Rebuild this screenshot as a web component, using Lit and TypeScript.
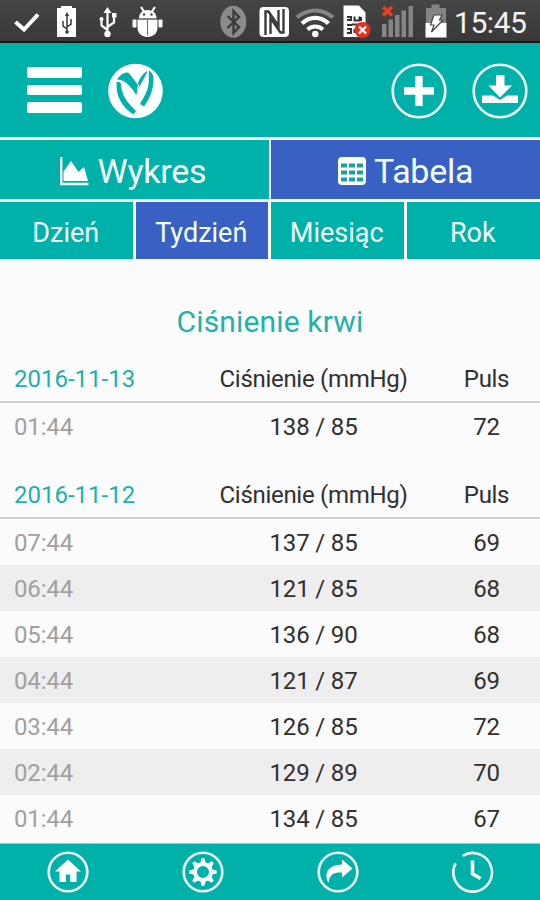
import { LitElement, html, svg, css } from "lit";
import { customElement } from "lit/decorators.js";
import { classMap } from "lit/directives/class-map.js";

interface Reading {
  time: string;
  pressure: string;
  pulse: number;
}

interface Day {
  date: string;
  readings: Reading[];
}

const DAYS: Day[] = [
  { date: "2016-11-13", readings: [{ time: "01:44", pressure: "138 / 85", pulse: 72 }] },
  {
    date: "2016-11-12",
    readings: [
      { time: "07:44", pressure: "137 / 85", pulse: 69 },
      { time: "06:44", pressure: "121 / 85", pulse: 68 },
      { time: "05:44", pressure: "136 / 90", pulse: 68 },
      { time: "04:44", pressure: "121 / 87", pulse: 69 },
      { time: "03:44", pressure: "126 / 85", pulse: 72 },
      { time: "02:44", pressure: "129 / 89", pulse: 70 },
      { time: "01:44", pressure: "134 / 85", pulse: 67 },
    ],
  },
];

@customElement("status-bar")
class StatusBar extends LitElement {
  static styles = css`
    :host {
      display: flex;
      justify-content: space-between;
      height: 43px;
      box-sizing: border-box;
      border-bottom: 2px solid #1c1315;
      background: linear-gradient(#454545, #393939);
      color: #f4f4f4;
    }
    .icons {
      display: block;
      height: 41px;
    }
    .clock {
      width: 86px;
      padding-top: 4px;
      box-sizing: border-box;
      font: 30px/38px Roboto, sans-serif;
      letter-spacing: -0.450px;
      white-space: nowrap;
    }
  `;

  render() {
    return html`
      <svg class="icons" width="454" height="41" viewBox="0 0 454 41">
        <path d="M15.500 22l8.500 7.500L38 14.500" fill="none" stroke="#fff" stroke-width="4" />
        <path d="M57 8h4V6h11v2h4v29H57z" fill="#fff" />
        <g fill="none" stroke="#3a3a3a" stroke-width="1.500">
          <path d="M67 15v18M67 29l-4-3v-5M67 27l4-3v-5" />
        </g>
        <path d="M67 12l2.200 4h-4.400z" fill="#3a3a3a" />
        <circle cx="67" cy="32" r="1.800" fill="#3a3a3a" />
        <g fill="none" stroke="#fff" stroke-width="2.200">
          <path d="M107.500 11v22M107.500 30l-6-4.500v-6M107.500 27l6.500-4.500v-7" />
        </g>
        <path d="M107.500 7l4 6h-8z" fill="#fff" />
        <circle cx="107.500" cy="34" r="3.200" fill="#fff" />
        <circle cx="101.500" cy="19" r="2" fill="#fff" />
        <rect x="112" y="13" width="4.500" height="4.500" fill="#fff" />
        <g fill="#fff">
          <path d="M139 18.500c0-5 3-8.500 8.500-8.500s9 3.500 9 8.500z" />
          <path d="M137.500 19.500h20v8c0 6-4.500 9.500-10 9.500s-10-3.500-10-9.500z" />
          <rect x="132.500" y="19.500" width="4" height="8" rx="1" />
          <rect x="158.500" y="19.500" width="4" height="8" rx="1" />
        </g>
        <path d="M141 7l3 4.500M155 7l-3 4.500" stroke="#fff" stroke-width="2.200" />
        <path d="M147.500 19.500v16M137 19h21" stroke="#666" stroke-width="1" />
        <circle cx="144" cy="14.500" r="1.200" fill="#444" />
        <circle cx="151.500" cy="14.500" r="1.200" fill="#444" />

        <ellipse cx="233.300" cy="21.800" rx="13" ry="16" fill="#8b8b8b" />
        <path d="M227.500 16l11.500 11-5.500 6v-22l5.500 6-11.500 11" fill="none" stroke="#3b3b3b" stroke-width="2.400" />

        <rect x="259.500" y="7" width="29.500" height="30" rx="4" fill="#fff" />
        <g fill="none" stroke="#3b3b3b" stroke-width="2.400">
          <path d="M265.500 35V11.500h3l10 14.500V10" />
          <path d="M283.500 9v23.500h-3L270.500 18v16" />
        </g>

        <g fill="none">
          <path d="M297 17.500c10.500-9.500 25.500-9.500 36 0" stroke="#858585" stroke-width="4" />
          <path d="M302 23.500c8-7.500 18.500-7.500 26.500 0" stroke="#fff" stroke-width="4.400" />
          <path d="M307.500 29.500c4.500-4 11-4 15.500 0" stroke="#fff" stroke-width="3.800" />
        </g>
        <circle cx="315.300" cy="34" r="3.200" fill="#fff" />

        <path d="M343.500 5.500H359l6.500 7V37h-22z" fill="#fff" />
        <g fill="none" stroke="#333" stroke-width="2">
          <path d="M347 17h4v3h-4M347 25h5M347 29h4v4h-4M354.500 16.500v4h5v-4M361 17v4M354.500 33v-4M352 24.500h8" />
        </g>
        <circle cx="362.500" cy="30" r="8" fill="#e62e20" />
        <path d="M359 26.500l7 7M366 26.500l-7 7" stroke="#fff" stroke-width="2.400" />

        <path d="M383 7l9 8.500M392 7l-9 8.500" stroke="#e8402a" stroke-width="3.200" />
        <g fill="#858585">
          <rect x="382" y="24" width="4.500" height="13" />
          <rect x="388.500" y="19.500" width="4.500" height="17.500" />
          <rect x="395" y="15" width="4.500" height="22" />
          <rect x="401.500" y="10.500" width="4.500" height="26.500" />
          <rect x="408.500" y="6" width="4.500" height="31" />
        </g>

        <path d="M426 8h5.500V4.500h8V8h6.500v17h-20z" fill="#858585" />
        <path d="M425.500 23h21v14.500h-21z" fill="#fff" />
        <path d="M434 15h8l-2.500 5h3.500L431.500 32l2.500-7h-3.500z" fill="#fff" stroke="#444" stroke-width="1.200" />
      </svg>
      <span class="clock">15:45</span>
    `;
  }
}

@customElement("app-root")
class AppRoot extends LitElement {
  static styles = css`
    :host {
      display: flex;
      flex-direction: column;
      height: 900px;
      overflow: hidden;
      background: #fbfbfb;
      font-family: Roboto, sans-serif;
      color: #303030;
    }
    svg {
      display: block;
    }
    .header {
      display: flex;
      align-items: center;
      height: 94px;
      box-sizing: border-box;
      padding: 1px 12.500px 0 27px;
      background: #00b1a9;
    }
    .menu {
      display: grid;
      gap: 7px;
      width: 54.500px;
      margin: 0 26px 1px 0;
    }
    .menu i {
      height: 10.500px;
      border-radius: 2px;
      background: #fff;
    }
    .actions {
      display: flex;
      gap: 25px;
      margin-left: auto;
    }
    .tabs {
      display: grid;
      grid-template-columns: 1fr 1fr;
      gap: 2.500px;
      height: 59px;
      margin-top: 3px;
    }
    .ranges {
      display: grid;
      grid-template-columns: 133px 132px 133px 1fr;
      gap: 3px;
      height: 57px;
      margin-top: 3px;
    }
    .tab {
      display: flex;
      align-items: center;
      justify-content: center;
      background: #00b1a9;
      color: #f3fffd;
      white-space: nowrap;
    }
    .tab.active {
      background: #3961c3;
    }
    .tabs .tab {
      gap: 8px;
      padding: 3px 2px 0 0;
      box-sizing: border-box;
      font-size: 34px;
      letter-spacing: -0.250px;
    }
    .tabs .tab.active {
      padding-right: 0;
    }
    .ranges .tab {
      font-size: 27px;
      padding: 4px 1.500px 0 0;
      box-sizing: border-box;
    }
    h1 {
      margin: 44px 0 0;
      height: 37px;
      font: 30px/37px Roboto, sans-serif;
      letter-spacing: 0.150px;
      text-align: center;
      color: #22b2a8;
    }
    .day {
      padding-top: 17px;
    }
    .line {
      display: grid;
      grid-template-columns: 194px 239px 107px;
      height: 46.100px;
      font-size: 24px;
      line-height: 48.500px;
      letter-spacing: -0.150px;
      text-align: center;
      white-space: nowrap;
    }
    .line > :first-child {
      padding-left: 14px;
      text-align: left;
    }
    .head {
      height: 44px;
      line-height: 44px;
      letter-spacing: -0.300px;
      border-bottom: 2px solid #cfcfcf;
    }
    .head > :first-child {
      color: #1eb1a7;
      letter-spacing: 0;
    }
    .day + .day {
      padding-top: 23.500px;
    }
    .reading > :first-child {
      color: #a0a0a0;
    }
    .reading:nth-child(odd) {
      background: #eee;
    }
    .nav {
      display: grid;
      grid-template-columns: repeat(4, 1fr);
      place-items: center;
      height: 57px;
      box-sizing: border-box;
      border-top: 1px solid #8dd0ca;
      margin-top: auto;
      flex: none;
      background: #00b1a9;
    }
  `;

  private tab(label: string, active: boolean, icon: unknown = "") {
    return html`<div class=${classMap({ tab: true, active })}>${icon}<span>${label}</span></div>`;
  }

  private navIcon(glyph: unknown) {
    return html`<svg width="42" height="42" viewBox="0 0 42 42">
      <circle cx="21" cy="21" r="19.300" fill="none" stroke="#f0fffd" stroke-width="2.600" />
      ${glyph}
    </svg>`;
  }

  render() {
    const chart = html`<svg width="29" height="29" viewBox="0 0 29 29">
      <path d="M1.200 0v27h27.300" fill="none" stroke="#f3fffd" stroke-width="2.400" />
      <path d="M3.500 24V14.500L11 4l7.500 11 5.500-5L28 24z" fill="#fff" />
    </svg>`;
    const grid = html`<svg width="28" height="28" viewBox="0 0 28 28">
      <rect width="28" height="28" rx="4" fill="#fff" />
      <g fill="#1c9fa6">
        ${[7, 14, 21].map((y) =>
          [3, 11, 19].map((x) => svg`<rect x=${x} y=${y - 0.5} width="6" height="4" />`),
        )}
      </g>
    </svg>`;

    return html`
      <status-bar></status-bar>
      <header class="header">
        <div class="menu"><i></i><i></i><i></i></div>
        <svg width="55" height="56" viewBox="0 0 55 56">
          <circle cx="27.500" cy="28" r="27.300" fill="#fff" />
          <g fill="#00b1a9">
            <path d="M9 16.500C12 12 16 9 19.500 9.500c2 .5 4 4 10.500 12.500L28.500 32C24 26 19 17 9 16.500z" />
            <path d="M8.700 19c2.500-.5 4 .5 4.300 2.500C13.500 33 20 40 28 48l-2.500 3.500C15 45 7 33 8.700 19z" />
            <path d="M30 20c2-5.500 5-9.500 9.500-12.500-1.500 5.500-4.500 9-8 16.500z" />
            <path d="M41 7.500c2.500 1.500 4 3.500 4.500 7C46 26 42 35 36 43.500L32 41c4-7 8.500-14 8.800-23 .2-4-.3-7 .2-10.500z" />
          </g>
        </svg>
        <div class="actions">
          <svg width="56" height="56" viewBox="0 0 56 56">
            <circle cx="28" cy="28" r="26.300" fill="none" stroke="#f0fffd" stroke-width="2.600" />
            <path d="M28 13v30M13 28h30" stroke="#fff" stroke-width="7.300" />
          </svg>
          <svg width="56" height="56" viewBox="0 0 56 56">
            <circle cx="28" cy="28" r="26.300" fill="none" stroke="#f0fffd" stroke-width="2.600" />
            <path d="M10 32.500h11l7 4.500 7-4.500h11V40H10z" fill="#fff" />
            <path d="M24 12h8.500v10.500H40L28 34.500 16.500 22.500H24z" fill="#fff" />
          </svg>
        </div>
      </header>

      <nav class="tabs">${this.tab("Wykres", false, chart)}${this.tab("Tabela", true, grid)}</nav>
      <nav class="ranges">
        ${this.tab("Dzień", false)}${this.tab("Tydzień", true)}${this.tab("Miesiąc", false)}${this.tab("Rok", false)}
      </nav>

      <h1>Ciśnienie krwi</h1>
      ${DAYS.map(
        (day) => html`<section class="day">
          <div class="line head"><span>${day.date}</span><span>Ciśnienie (mmHg)</span><span>Puls</span></div>
          ${day.readings.map(
            (r) => html`<div class="line reading">
              <span>${r.time}</span><span>${r.pressure}</span><span>${r.pulse}</span>
            </div>`,
          )}
        </section>`,
      )}

      <footer class="nav">
        ${this.navIcon(svg`<path d="M21 8.500L8 20.500h4.500V31h6.300v-7.500h4.400V31h6.300V20.500H34z" fill="#fff" />`)}
        ${this.navIcon(svg`<circle cx="21" cy="21" r="8" fill="none" stroke="#fff" stroke-width="4" />
          ${[0, 45, 90, 135, 180, 225, 270, 315].map(
            (a) => svg`<path d="M18.200 13l1.300-5.700h3L23.800 13z" fill="#fff" transform=${`rotate(${a} 21 21)`} />`,
          )}`)}
        ${this.navIcon(svg`<path d="M25 8.500l10.500 9-10.500 9v-5c-7-.5-12.500 1-13.500 10.500C6.500 22 11 14 25 13.500z" fill="#fff" />`)}
        <svg width="42" height="42" viewBox="0 0 42 42">
          <path d="M10.700 4.800A19.300 19.300 0 1 1 3.600 12.300" fill="none" stroke="#f0fffd" stroke-width="2.600" />
          <path d="M20.500 9.500v13.200l8 4.800" fill="none" stroke="#fff" stroke-width="3.600" />
        </svg>
      </footer>
    `;
  }
}
